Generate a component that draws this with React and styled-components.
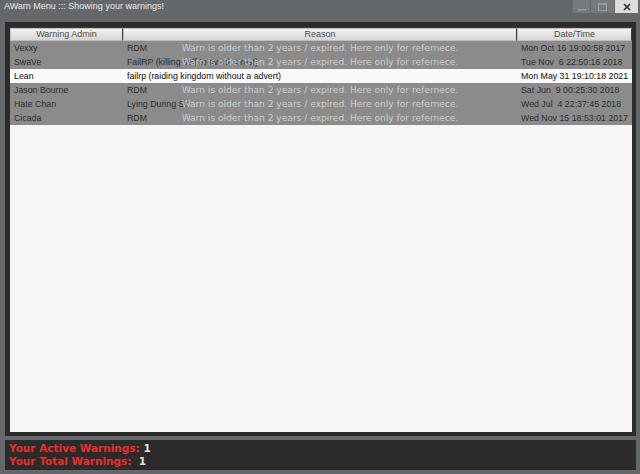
import React from 'react';
import styled, { createGlobalStyle } from 'styled-components';

const warnings = [
    { admin: 'Vexxy', reason: 'RDM', date: 'Mon Oct 16 19:00:58 2017', expired: true },
    { admin: 'SwaVe', reason: 'FailRP (killing self to avoid arrest)', date: 'Tue Nov  6 22:50:16 2018', expired: true },
    { admin: 'Lean', reason: 'failrp (raiding kingdom without a advert)', date: 'Mon May 31 19:10:18 2021', expired: false },
    { admin: 'Jason Bourne', reason: 'RDM', date: 'Sat Jun  9 00:25:30 2018', expired: true },
    { admin: 'Hate Chan', reason: 'Lying During Sit', date: 'Wed Jul  4 22:37:45 2018', expired: true },
    { admin: 'Cicada', reason: 'RDM', date: 'Wed Nov 15 18:53:01 2017', expired: true },
];

const GlobalStyle = createGlobalStyle`
    html, body {
        margin: 0;
        padding: 0;
        background: #65686a;
    }
`;

const App = () => {
    const active = warnings.filter(w => !w.expired).length;

    return (
        <>
            <GlobalStyle />
            <Window>
                <TitleBar>
                    <Title>AWarn Menu ::: Showing your warnings!</Title>
                    <Controls>
                        <CtrlButton width={17}>
                            <svg width="8" height="8" viewBox="0 0 8 8"><rect x="0" y="6" width="8" height="1.5" fill="#9a9d9f" /></svg>
                        </CtrlButton>
                        <CtrlButton width={23}>
                            <svg width="9" height="8" viewBox="0 0 9 8"><rect x="0.5" y="0.5" width="8" height="7" fill="none" stroke="#9a9d9f" strokeWidth="1" /><rect x="0" y="0" width="9" height="2" fill="#9a9d9f" /></svg>
                        </CtrlButton>
                        <CtrlButton width={23} close>
                            <svg width="8" height="8" viewBox="0 0 8 8"><path d="M1 1 L7 7 M7 1 L1 7" stroke="#333" strokeWidth="1.7" /></svg>
                        </CtrlButton>
                    </Controls>
                </TitleBar>

                <Frame>
                    <List>
                        <HeaderRow>
                            <HeaderCell>Warning Admin</HeaderCell>
                            <HeaderCell>Reason</HeaderCell>
                            <HeaderCell>Date/Time</HeaderCell>
                        </HeaderRow>
                        {warnings.map((w, i) => (
                            <Row key={i} expired={w.expired}>
                                <Cell>{w.admin}</Cell>
                                <Cell>{w.reason}</Cell>
                                <Cell>{w.date}</Cell>
                                {w.expired && (
                                    <ExpiredNote>Warn is older than 2 years / expired. Here only for refernece.</ExpiredNote>
                                )}
                            </Row>
                        ))}
                    </List>
                </Frame>

                <Footer>
                    <Stat>Your Active Warnings: <Count>{active}</Count></Stat>
                    <Stat>Your Total Warnings: &nbsp;<Count>{active}</Count></Stat>
                </Footer>
            </Window>
        </>
    );
};

export default App;

const Window = styled.div`
    display: flex;
    flex-direction: column;
    width: 640px;
    height: 474px;
    box-sizing: border-box;
    padding: 0 4px 4px 5px;
    background: #65686a;
    font-family: 'Liberation Sans', Arial, sans-serif;
`;

const TitleBar = styled.div`
    display: flex;
    justify-content: space-between;
    align-items: flex-start;
    height: 22px;
    margin: 0 -4px 0 -5px;
    padding: 0 2px 0 4px;
`;

const Title = styled.div`
    color: #e8e8e8;
    font-size: 9px;
    line-height: 12px;
`;

const Controls = styled.div`
    display: flex;
    gap: 1px;
    height: 13px;
`;

const CtrlButton = styled.div`
    display: flex;
    align-items: center;
    justify-content: center;
    width: ${p => p.width}px;
    height: 13px;
    background: ${p => (p.close ? '#dcdcdc' : '#767a7c')};
`;

const Frame = styled.div`
    flex: 1;
    display: flex;
    box-sizing: border-box;
    padding: 5px 4px 4px 5px;
    background: #2b2b2b;
`;

const List = styled.div`
    flex: 1;
    display: flex;
    flex-direction: column;
    background: #f6f6f6;
    border-top: 1px solid #3a3a3a;
`;

const columns = '113px 394px 1fr';

const HeaderRow = styled.div`
    display: grid;
    grid-template-columns: ${columns};
    height: 12px;
    border-bottom: 1px solid #4a4a4a;
`;

const HeaderCell = styled.div`
    box-sizing: border-box;
    text-align: center;
    font-size: 9px;
    line-height: 11px;
    color: #4d4d4d;
    background: linear-gradient(#f2f2f2, #d6d6d6);
    border: 1px solid #bdbdbd;
    border-right: 1px solid #3a3a3a;
`;

const Row = styled.div`
    position: relative;
    display: grid;
    grid-template-columns: ${columns};
    height: 14px;
    background: ${p => (p.expired ? '#8b8b8b' : '#f9f9f9')};
    color: ${p => (p.expired ? '#2e2e2e' : '#111')};
`;

const Cell = styled.div`
    padding-left: 4px;
    font-size: 8.8px;
    line-height: 14px;
    white-space: pre;
    overflow: hidden;
`;

// greyed message laid over the reason column of old warnings
const ExpiredNote = styled.div`
    position: absolute;
    top: 0;
    left: 113px;
    width: 394px;
    text-align: center;
    font-family: 'DejaVu Sans', sans-serif;
    font-size: 9.1px;
    line-height: 14px;
    color: #cdcdcd;
    pointer-events: none;
`;

const Footer = styled.div`
    display: flex;
    flex-direction: column;
    justify-content: center;
    height: 30px;
    margin-top: 4px;
    box-sizing: border-box;
    padding-left: 4px;
    background: #2b2b2b;
`;

const Stat = styled.div`
    color: #e8302a;
    font-family: 'DejaVu Sans', sans-serif;
    font-weight: bold;
    font-size: 10.5px;
    line-height: 13px;
`;

const Count = styled.span`
    color: #f2dede;
`;
